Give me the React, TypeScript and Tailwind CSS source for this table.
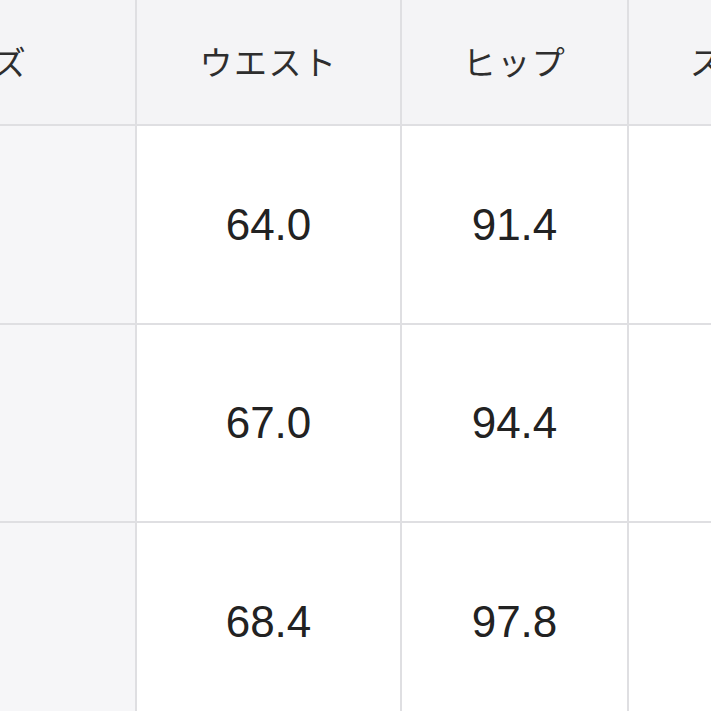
import { Fragment } from "react";

export default function App() {
  const head = "flex items-center justify-center bg-[#f4f4f6] text-[33px] text-[#2e2e2e] tracking-[1.5px]";
  const side = "bg-[#f6f6f8]";
  const cell = "flex items-center justify-center bg-white text-[44px] text-[#222]";
  const rows = [
    ["64.0", "91.4"],
    ["67.0", "94.4"],
    ["68.4", "97.8"],
  ];
  const jp = { fontFamily: '"Noto Sans CJK JP", sans-serif' };
  return (
    <div className="w-[711px] h-[711px] overflow-hidden bg-white">
      <div
        className="-ml-[183px] grid grid-cols-[318px_263px_225px_225px] grid-rows-[124px_197px_196px_198px] gap-[2px] bg-[#dfdfe2] w-max"
        style={{ fontFamily: '"Liberation Sans", "Noto Sans CJK JP", sans-serif' }}
      >
        <div className={head} style={jp}>サイズ</div>
        <div className={head} style={jp}>ウエスト</div>
        <div className={head} style={jp}>ヒップ</div>
        <div className={head} style={jp}>スソ幅</div>
        {rows.map((r, i) => (
          <Fragment key={i}>
            <div className={side}></div>
            <div className={cell}>{r[0]}</div>
            <div className={cell}>{r[1]}</div>
            <div className="bg-white"></div>
          </Fragment>
        ))}
      </div>
    </div>
  );
}
